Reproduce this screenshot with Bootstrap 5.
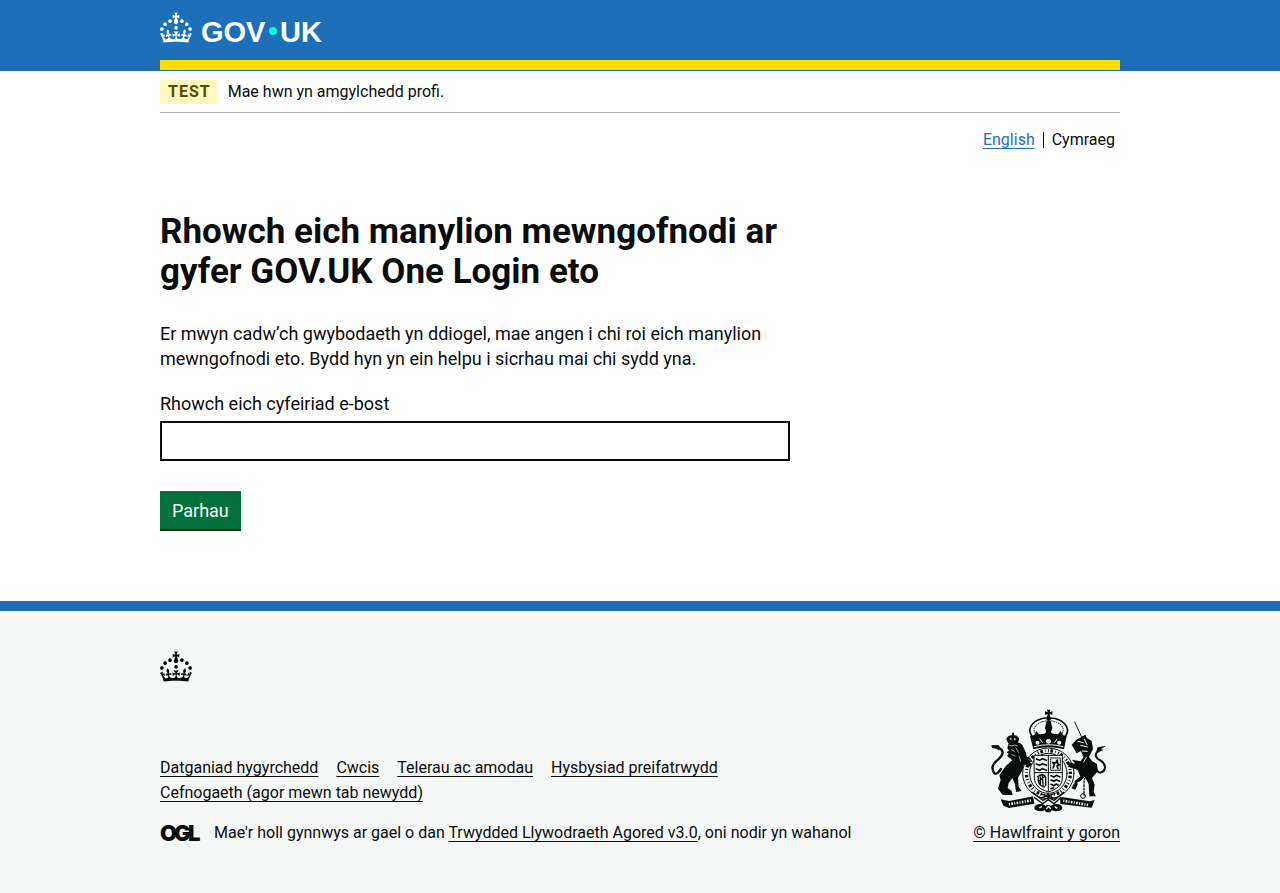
<!DOCTYPE html>
<html lang="cy">
<head>
<meta charset="utf-8">
<meta name="viewport" content="width=device-width, initial-scale=1">
<title>Rhowch eich manylion mewngofnodi ar gyfer GOV.UK One Login eto</title>
<link href="https://cdn.jsdelivr.net/npm/bootstrap@5.3.0/dist/css/bootstrap.min.css" rel="stylesheet">
<style>
  body { font-family: Roboto, "Liberation Sans", sans-serif; font-size: 18px; line-height: 25px; color: #0b0c0c; background: #fff; }
  a { color: inherit; text-decoration-thickness: 1px; text-underline-offset: 3px; text-decoration-skip-ink: none; }
  a:hover { color: #003078; }
  .site-width { max-width: 960px; }
  .site-header { background: #1d70b8; border-bottom: 1px solid #1d70b8; }
  .header-bar { padding: 12px 0 8px; border-bottom: 10px solid #fd0; }
  .header-bar svg { display: block; }
  .logo-words { font: 700 29px "Liberation Sans", sans-serif; }
  .small-copy { font-size: 16px; line-height: 20px; }
  .phase { padding: 9px 0 8px; border-bottom: 1px solid #b1b4b6; }
  .phase-tag { background: #fff7bf; color: #594d00; font-weight: 700; letter-spacing: 1px; padding: 2px 7px 2px 8px; margin-right: 10px; }
  .lang { margin-top: 17px; padding-right: 5px; }
  .lang a { color: #1d70b8; }
  .lang li + li { border-left: 1px solid #0b0c0c; padding-left: 8px; margin-left: 8px; line-height: 16px; }
  .lang ul { margin: 0; }
  main { padding: 62px 0 70px; }
  h1 { font-size: 35px; line-height: 40px; font-weight: 700; margin-bottom: 29px; }
  .form-area { max-width: 630px; }
  .form-area p { margin-bottom: 20px; }
  .form-area label { margin-bottom: 5px; padding: 0; }
  .form-area .form-control { height: 40px; border: 2px solid #0b0c0c; border-radius: 0; margin-bottom: 30px; }
  .form-area .form-control:focus { outline: 3px solid #fd0; box-shadow: inset 0 0 0 2px #0b0c0c; }
  .btn-go { background: #00703c; color: #fff; border: 0; border-bottom: 2px solid #002d18; border-radius: 0; padding: 7px 12px 6px; font-size: 18px; line-height: 25px; }
  .btn-go:hover { background: #005a30; color: #fff; }
  footer { background: #f6f7f7; border-top: 10px solid #1d70b8; padding: 40px 0 50px; }
  .crown { display: block; margin-bottom: 27px; }
  .foot-links { column-gap: 18px; row-gap: 5px; margin-bottom: 16px; }
  .ogl { margin-right: 12px; }
  .arms { display: block; margin: 0 13px 10px auto; }
</style>
</head>
<body>
<svg class="d-none" aria-hidden="true">
  <symbol id="crown" viewBox="0 0 32 30"><path d="M22.6 10.4c-1 .4-2-.1-2.4-1-.4-.9.1-2 1-2.4.9-.4 2 .1 2.4 1s-.1 2-1 2.4m-5.9 6.7c-.9.4-2-.1-2.4-1-.4-.9.1-2 1-2.4.9-.4 2 .1 2.4 1s-.1 2-1 2.4m10.8-3.7c-1 .4-2-.1-2.4-1-.4-.9.1-2 1-2.4.9-.4 2 .1 2.4 1s0 2-1 2.4m3.3 4.8c-1 .4-2-.1-2.4-1-.4-.9.1-2 1-2.4.9-.4 2 .1 2.4 1s-.1 2-1 2.4M17 4.7l2.3 1.2V2.5l-2.3.7-.2-.2.9-3h-3.4l.9 3-.2.2c-.1.1-2.3-.7-2.3-.7v3.4L15 4.7c.1.1.1.2.2.2l-1.3 4c-.1.2-.1.4-.1.6 0 1.1.8 2 1.9 2.2h.7c1-.2 1.9-1.1 1.9-2.1 0-.2 0-.4-.1-.6l-1.3-4c-.1-.2 0-.2.1-.3m-7.6 5.7c.9.4 2-.1 2.4-1 .4-.9-.1-2-1-2.4-.9-.4-2 .1-2.4 1s0 2 1 2.4m-5 3c.9.4 2-.1 2.4-1 .4-.9-.1-2-1-2.4-.9-.4-2 .1-2.4 1s.1 2 1 2.4m-3.2 4.8c.9.4 2-.1 2.4-1 .4-.9-.1-2-1-2.4-.9-.4-2 .1-2.4 1s0 2 1 2.4m14.8 11c4.4 0 8.6.3 12.3.8 1.1-4.5 2.4-7 3.7-8.8l-2.5-.9c.2 1.3.3 1.9 0 2.7-.4-.4-.8-1.1-1.1-2.3l-1.2 4c.7-.5 1.3-.8 2-.9-1.1 2.5-2.6 3.1-3.5 3-1.1-.2-1.7-1.2-1.5-2.1.3-1.2 1.5-1.5 2.1-.1 1.1-2.3-.8-3-2-2.3 1.9-1.9 2.1-3.5.6-5.6-2.1 1.6-2.1 3.2-1.2 5.5-1.2-1.4-3.2-.6-2.5 1.6.9-1.4 2.1-.5 1.9.8-.2 1.1-1.7 2.1-3.5 1.9-2.7-.2-2.9-2.1-2.9-3.6.7-.1 1.9.5 2.9 1.9l.4-4.3c-1.1 1.1-2.1 1.4-3.2 1.4.4-1.2 2.1-3 2.1-3h-5.4s1.7 1.9 2.1 3c-1.1 0-2.1-.2-3.2-1.4l.4 4.3c1-1.4 2.2-2 2.9-1.9-.1 1.5-.2 3.4-2.9 3.6-1.9.2-3.4-.8-3.5-1.9-.2-1.3 1-2.2 1.9-.8.7-2.3-1.2-3-2.5-1.6.9-2.2.9-3.9-1.2-5.5-1.5 2-1.3 3.7.6 5.6-1.2-.7-3.1 0-2 2.3.6-1.4 1.8-1.1 2.1.1.2.9-.3 1.9-1.5 2.1-.9.2-2.4-.5-3.5-3 .6 0 1.2.3 2 .9l-1.2-4c-.3 1.1-.7 1.9-1.1 2.3-.3-.8-.2-1.4 0-2.7l-2.9.9C1.3 23 2.6 25.5 3.7 30c3.7-.5 7.9-.8 12.3-.8"/></symbol>
</svg>

<header class="site-header px-3">
  <div class="site-width mx-auto header-bar">
    <a href="#" class="d-inline-block align-top text-white text-decoration-none" aria-label="GOV.UK">
      <svg width="172" height="40" viewBox="0 0 172 40" fill="#fff">
        <use href="#crown" width="32" height="31"/>
        <text class="logo-words" x="41" y="30">GOV</text>
        <circle cx="113" cy="19" r="4" fill="#00ffe0"/>
        <text class="logo-words" x="120" y="30">UK</text>
      </svg>
    </a>
  </div>
</header>

<div class="px-3">
  <div class="site-width mx-auto">
    <div class="phase small-copy d-flex align-items-center">
      <strong class="phase-tag">TEST</strong><span>Mae hwn yn amgylchedd profi.</span>
    </div>
    <nav class="lang small-copy" aria-label="Dewis iaith">
      <ul class="list-unstyled d-flex justify-content-end align-items-center">
        <li><a href="#" lang="en">English</a></li>
        <li>Cymraeg</li>
      </ul>
    </nav>
    <main>
      <form class="form-area">
        <h1>Rhowch eich manylion mewngofnodi ar gyfer GOV.UK One Login eto</h1>
        <p>Er mwyn cadw’ch gwybodaeth yn ddiogel, mae angen i chi roi eich manylion mewngofnodi eto. Bydd hyn yn ein helpu i sicrhau mai chi sydd yna.</p>
        <label class="d-block" for="email">Rhowch eich cyfeiriad e-bost</label>
        <input class="form-control" id="email" type="email" autocomplete="email">
        <button class="btn btn-go d-block" type="submit">Parhau</button>
      </form>
    </main>
  </div>
</div>

<footer class="px-3">
  <div class="site-width mx-auto small-copy">
    <svg class="crown" width="32" height="31" fill="#0b0c0c" aria-hidden="true"><use href="#crown" width="32" height="31"/></svg>
    <div class="d-flex flex-wrap flex-md-nowrap align-items-end justify-content-between gap-4">
      <div>
        <ul class="foot-links list-unstyled d-flex flex-wrap">
          <li><a href="#">Datganiad hygyrchedd</a></li>
          <li><a href="#">Cwcis</a></li>
          <li><a href="#">Telerau ac amodau</a></li>
          <li><a href="#">Hysbysiad preifatrwydd</a></li>
          <li><a href="#">Cefnogaeth (agor mewn tab newydd)</a></li>
        </ul>
        <div class="d-flex align-items-center">
          <svg class="ogl flex-shrink-0" width="42" height="28" viewBox="-1 0 42 28" role="img" aria-label="OGL">
            <text x="-1 13 27" y="22" font-family="Inter" font-weight="900" font-size="22" fill="#0b0c0c">OGL</text>
          </svg>
          <span>Mae'r holl gynnwys ar gael o dan <a href="#">Trwydded Llywodraeth Agored v3.0</a>, oni nodir yn wahanol</span>
        </div>
      </div>
      <a href="#" class="text-nowrap mb-1">
        <svg class="arms" width="117" height="104" viewBox="30 15 351 312" aria-hidden="true" fill="#0b0c0c" stroke="#0b0c0c" stroke-linecap="round" stroke-linejoin="round">
          <!-- royal crown -->
          <g stroke="none">
            <path d="M201 17h10l-2 8 8-3v11l-8-3 2 9h-10l2-9-8 3V22l8 3z"/>
            <circle cx="206" cy="44" r="7"/>
            <path d="M200 50h12l5 22-6 17h-10l-6-17z"/>
            <path fill-rule="evenodd" d="M150 96q55-15 110 0l-8 40q-46-13-92 0zm22 14a6 6 0 1 0 1 0zm33-5a8 7 0 1 0 1 0zm32 5a6 6 0 1 0 1 0z"/>
            <path d="M160 98l10-17 9 15zM191 92l14-16 15 16zM230 96l12-15 10 17z"/>
          </g>
          <g fill="none" stroke-width="5">
            <path d="M155 96c-18-28 12-52 44-54M257 96c18-28-12-52-44-54"/>
            <path stroke-width="3" stroke-dasharray="2 5" d="M165 88c-9-19 8-34 32-37M247 88c9-19-8-34-32-37"/>
          </g>
          <g stroke="#f6f7f7" stroke-width="3" fill="none">
            <path d="M163 128q43-12 86 0"/>
            <path d="M180 105l7 10M231 105l-7 10"/>
          </g>
          <!-- garter and shield -->
          <g fill="none">
            <ellipse cx="205" cy="208" rx="77" ry="76" stroke-width="3"/>
            <ellipse cx="205" cy="208" rx="56" ry="60" stroke-width="3"/>
            <ellipse cx="205" cy="207" rx="66" ry="67" stroke-width="10" stroke-dasharray="3 5 8 6 2 7" stroke-linecap="butt"/>
            <path fill="#f6f7f7" stroke-width="3" d="M163 154h84v67c0 24-18 35-42 43-24-8-42-19-42-43z"/>
            <path stroke-width="3" d="M205 154v108M163 206h84"/>
            <path stroke-width="5" d="M169 165l10 4 8-5 12 5M169 180l10 4 8-5 12 5M169 195l10 4 8-5 12 5"/>
            <rect x="212" y="162" width="29" height="37" stroke-width="3" stroke-dasharray="3 3"/>
            <path stroke-width="5" d="M219 192l4-10-5-7 9 2 5-9 1 12 5 2-7 4 3 8"/>
            <path stroke-width="4" d="M173 218c10-9 21-7 24 2v25M175 220c-2 16 3 26 18 29M181 219v23M187 216l2 29M193 218l-16 12"/>
            <path stroke-width="5" d="M213 215l9 4 7-5 11 5M213 228l9 4 7-5 10 5M213 241l9 4 7-5 5 3M213 254l8-2"/>
          </g>
          <!-- lion -->
          <g stroke="none">
            <path d="M86 118c10-8 34-5 41 5l11 23 4 23 14 12-5 7-19-8-5 20-13 21 2 27 9 13-17 3-3-24-8-18-11 15-3 15 12 9 3 12H68l-14-19 8-26-4-14 20-29 19-16-16-13 5-6-6-6 7-4-5-8z"/>
            <path fill-rule="evenodd" d="M84 118q14-6 29 0l5-14q-5-10-16-10v-8h-6v8q-14 1-17 11zm4-13l5-4 2 7zm13-3l8 3-6 4z"/>
            <path d="M34 124l21-1 7 9-10-1 8 10-12-7-12-2z"/>
            <path d="M125 166l18-7 11 4-10 4 15 5-11 3-17-1z"/>
          </g>
          <path fill="none" stroke-width="7" d="M56 132c17 6 15 20-1 34-22 17-20 28-12 42 6 4 13-3 20-13"/>
          <path stroke="#f6f7f7" fill="none" stroke-width="2" d="M88 124l8 2 8-3 8 3M95 137l8 5M108 132l7 13M96 152l9 4M118 158l4 14"/>
          <!-- unicorn -->
          <path fill="none" stroke-width="3" d="M284 54l21 45"/>
          <g stroke="none">
            <path d="M275 122l13-14 16-9 12-7 4 9 15 10 4 24-12 24 10 13 14 8 2 22-17 20 8 20-3 21 7 14h-20l-2-37-12-22-11 12-18 9-1-8 17-13-8-20-27-9-5-15 24 5-9-12 26 5 8-12-7-19-13 7z"/>
            <path d="M353 130l25-5-15 11 8 2-13 5-12 9z"/>
            <path d="M285 234l9 5-8 18-12-4z"/>
          </g>
          <path fill="none" stroke-width="6" d="M356 139c-13 11-11 21 3 29 24 13 18 33 2 38-10 0-11-8-14-18"/>
          <path stroke="#f6f7f7" fill="none" stroke-width="3" d="M294 112l16 4M313 106l8 16M302 124l20 5M307 141l15 1M319 160l-8 14"/>
          <path fill="none" stroke-width="4" stroke-dasharray="5 5" d="M335 177c-7 27-22 34-23 60v36"/>
          <circle cx="309" cy="276" r="7" fill="none" stroke-width="3"/>
          <!-- motto ribbon and compartment -->
          <g stroke="none">
            <path d="M62 286l25 5 72-14 4 22-76 13-17-7z"/>
            <path d="M240 278l89 14 15-4-9 23-94-11z"/>
            <ellipse cx="181" cy="311" rx="18" ry="11"/>
            <ellipse cx="229" cy="311" rx="18" ry="11"/>
            <circle cx="205" cy="314" r="11"/>
          </g>
          <g fill="none" stroke-width="4">
            <path d="M158 265l30 24 17-8 18 8 28-24M164 281l24 18 17-12 17 12 20-18"/>
            <path d="M183 270l43 13M225 269l-43 13"/>
          </g>
          <g fill="none" stroke="#f6f7f7" stroke-width="4" stroke-linecap="butt">
            <path stroke-width="8" stroke-dasharray="3 4 5 4" d="M87 301l68-12M250 290l74 13"/>
            <path d="M178 312l8-5M199 315l7-8 6 8M224 308l8 5"/>
          </g>
        </svg>
        © Hawlfraint y goron
      </a>
    </div>
  </div>
</footer>
<script src="https://cdn.jsdelivr.net/npm/bootstrap@5.3.0/dist/js/bootstrap.bundle.min.js"></script>
</body>
</html>
